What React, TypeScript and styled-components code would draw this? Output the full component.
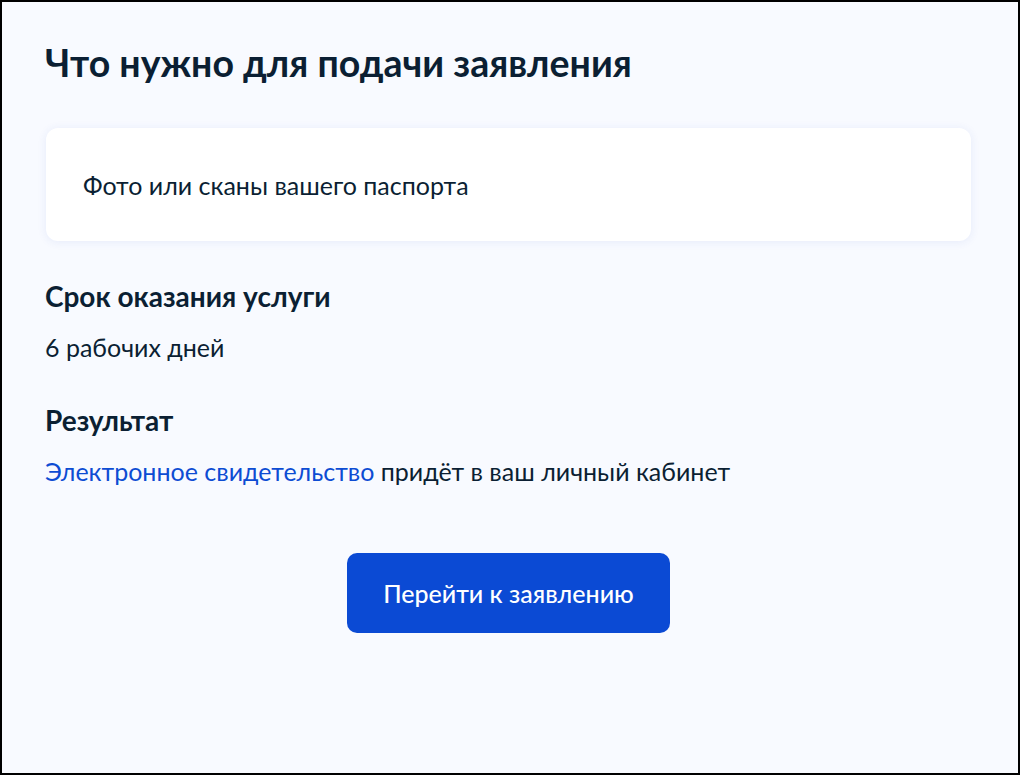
import styled, { createGlobalStyle } from "styled-components"

const GlobalStyle = createGlobalStyle`
    html, body {
        margin: 0;
        padding: 0;
        background: #ffffff;
    }
    body {
        font-family: Lato, "Noto Sans", "Liberation Sans", sans-serif;
        color: #0b1f33;
    }
`

const Frame = styled.div`
    box-sizing: border-box;
    width: 1020px;
    height: 775px;
    border: 2px solid #000;
    background: #f8faff;
    padding: 37px 47px 0 43px;
`

const Title = styled.h1`
    margin: 0;
    font-size: 37.5px;
    line-height: 48px;
    font-weight: 700;
    color: #0b1f33;
`

const Card = styled.div`
    margin: 41px 0 0 1px;
    height: 113px;
    display: flex;
    align-items: center;
    padding: 0 37px;
    background: #ffffff;
    border-radius: 12px;
    box-shadow: 0 1px 10px rgba(40, 80, 200, 0.09);
    font-size: 25px;
`

const Section = styled.section<{ $top: number }>`
    margin-top: ${props => props.$top}px;
`

const SubTitle = styled.h2`
    margin: 0;
    font-size: 28px;
    line-height: 32px;
    font-weight: 700;
`

const Text = styled.p`
    margin: 20px 0 0 0;
    font-size: 25px;
    line-height: 30px;
`

const Link = styled.a`
    color: #0d4cd3;
    text-decoration: none;
`

const Actions = styled.div`
    display: flex;
    justify-content: center;
    margin-top: 67px;
    padding-left: 1px;
`

const Button = styled.button`
    width: 323px;
    height: 80px;
    border: none;
    border-radius: 10px;
    background: #0b4ad4;
    color: #ffffff;
    font-family: inherit;
    font-size: 25px;
    font-weight: 500;
    cursor: pointer;
`

export default function App() {
    return (
        <>
            <GlobalStyle />
            <Frame>
                <Title>Что нужно для подачи заявления</Title>
                <Card>Фото или сканы вашего паспорта</Card>
                <Section $top={39}>
                    <SubTitle>Срок оказания услуги</SubTitle>
                    <Text>6 рабочих дней</Text>
                </Section>
                <Section $top={42}>
                    <SubTitle>Результат</SubTitle>
                    <Text>
                        <Link href="#">Электронное свидетельство</Link> придёт в ваш личный кабинет
                    </Text>
                </Section>
                <Actions>
                    <Button>Перейти к заявлению</Button>
                </Actions>
            </Frame>
        </>
    )
}
